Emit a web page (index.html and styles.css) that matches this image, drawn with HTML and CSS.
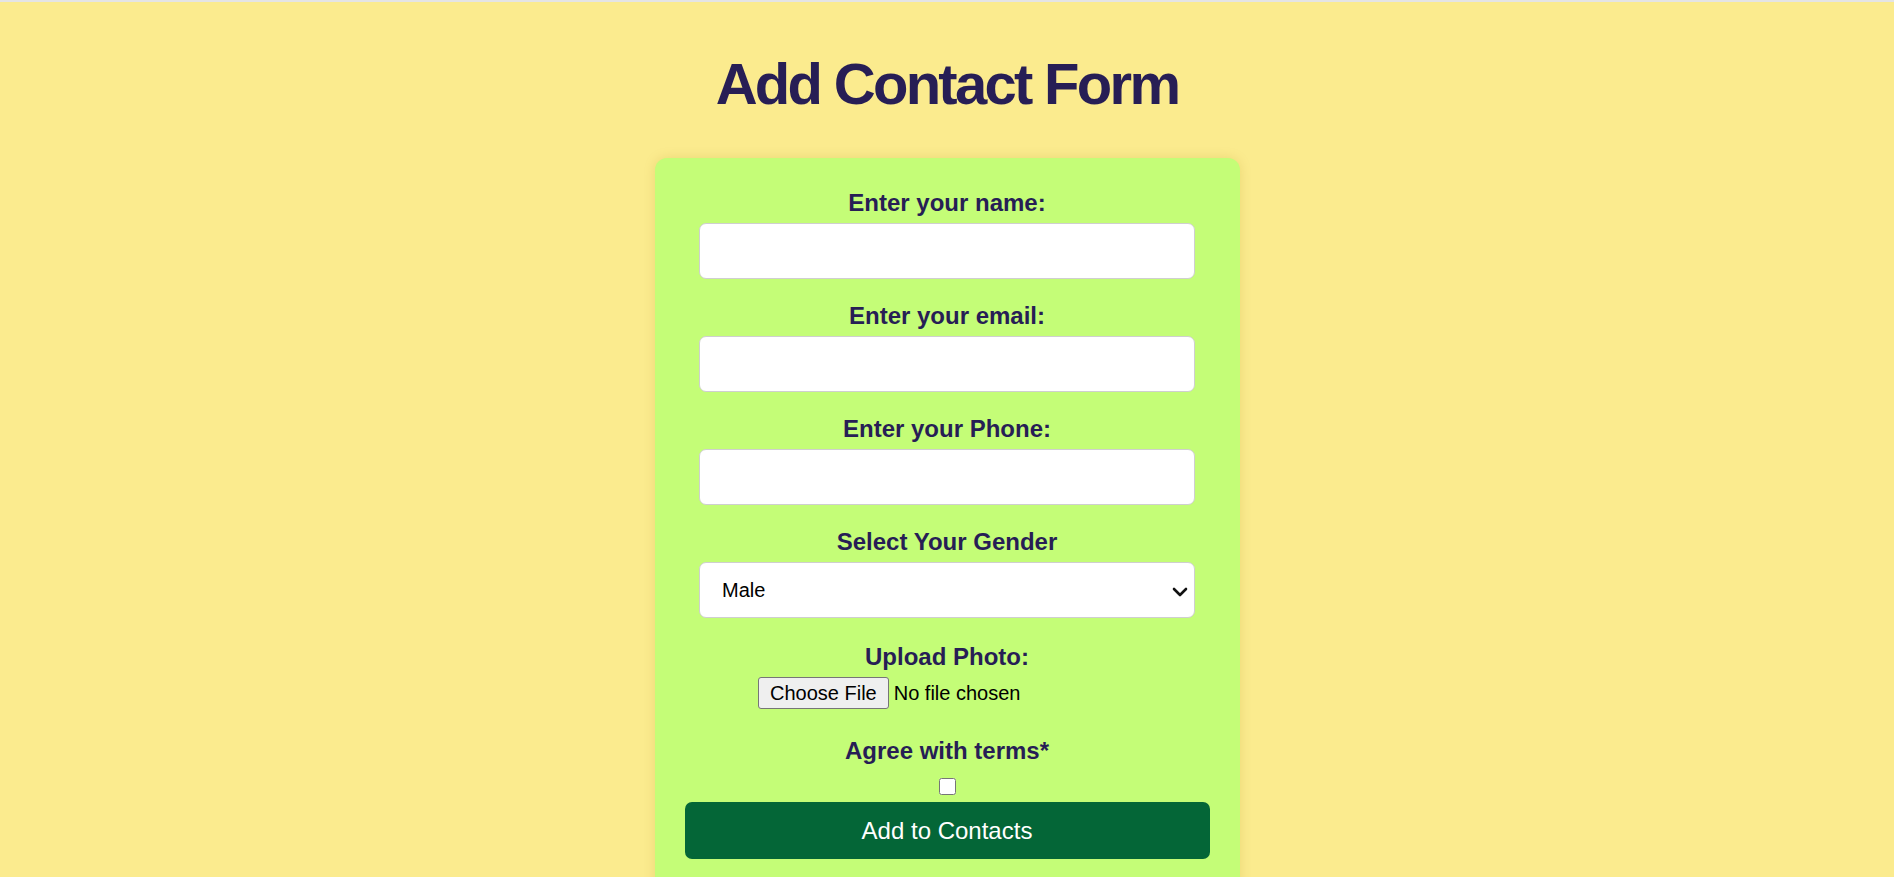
FILE: index.html
```html
<!DOCTYPE html>
<html lang="en">
<head>
<meta charset="utf-8">
<title>Add Contact Form</title>
<link rel="stylesheet" href="styles.css">
</head>
<body>
<div class="topline"></div>
<main class="page">
  <h1 class="title">Add Contact Form</h1>
  <form class="card">
    <label class="label" for="name">Enter your name:</label>
    <input class="field" id="name" type="text">

    <label class="label" for="email">Enter your email:</label>
    <input class="field" id="email" type="email">

    <label class="label" for="phone">Enter your Phone:</label>
    <input class="field" id="phone" type="tel">

    <label class="label" for="gender">Select Your Gender</label>
    <div class="select-wrap">
      <select class="field select" id="gender">
        <option>Male</option>
        <option>Female</option>
      </select>
      <svg class="chevron" width="16" height="10" viewBox="0 0 16 10"><polyline points="2,2 8,8 14,2" fill="none" stroke="#111" stroke-width="2.6" stroke-linecap="round" stroke-linejoin="round"/></svg>
    </div>

    <label class="label" for="photo">Upload Photo:</label>
    <input class="file" id="photo" type="file">

    <label class="label agree" for="terms">Agree with terms*</label>
    <input class="check" id="terms" type="checkbox">

    <button class="submit" type="button">Add to Contacts</button>
  </form>
</main>
</body>
</html>
```

FILE: styles.css
```css
html, body {
  margin: 0;
  padding: 0;
}
body {
  background: #fbeb8e;
  font-family: "Liberation Sans", Arial, sans-serif;
  min-height: 100vh;
}
.topline {
  height: 2px;
  background: #e4e4e4;
}
.page {
  display: flex;
  flex-direction: column;
  align-items: center;
}
.title {
  margin: 50px 0 42px;
  font-size: 58px;
  font-weight: 700;
  letter-spacing: -2.7px;
  line-height: 64px;
  color: #271e55;
}
.card {
  box-sizing: border-box;
  width: 585px;
  padding: 31px 30px 40px;
  background: #c4fd77;
  border-radius: 12px;
  box-shadow: 0 0 12px rgba(160, 130, 0, 0.18);
  display: flex;
  flex-direction: column;
  align-items: center;
}
.label {
  display: block;
  font-size: 24px;
  line-height: 28px;
  font-weight: 700;
  color: #271e55;
  margin-bottom: 6px;
}
.field {
  box-sizing: border-box;
  width: 496px;
  height: 56px;
  margin: 0 0 23px;
  border: 1px solid #cfcfcf;
  border-radius: 7px;
  background: #fff;
  font-family: "Liberation Sans", Arial, sans-serif;
  font-size: 20px;
  padding: 0 18px;
  outline: none;
}
.select-wrap {
  position: relative;
  width: 496px;
  margin-bottom: 25px;
}
.select {
  appearance: none;
  -webkit-appearance: none;
  margin: 0;
  padding: 0 22px;
  color: #000;
}
.chevron {
  position: absolute;
  right: 7px;
  top: 25px;
  pointer-events: none;
}
.file {
  width: 378px;
  height: 32px;
  margin: 0;
  font-family: "Liberation Sans", Arial, sans-serif;
  font-size: 20px;
  color: #000;
}
.file::file-selector-button {
  font-family: "Liberation Sans", Arial, sans-serif;
  font-size: 20px;
  height: 32px;
  padding: 0 11px;
  margin-right: 5px;
  border: 1px solid #767676;
  border-radius: 3px;
  background: #efefef;
  color: #000;
}
.agree {
  margin-top: 28px;
  margin-bottom: 13px;
}
.check {
  width: 17px;
  height: 17px;
  margin: 0 0 7px;
}
.submit {
  width: 525px;
  height: 57px;
  border: none;
  border-radius: 7px;
  background: #046637;
  color: #fff;
  font-family: "Liberation Sans", Arial, sans-serif;
  font-size: 24px;
  cursor: pointer;
}
```
